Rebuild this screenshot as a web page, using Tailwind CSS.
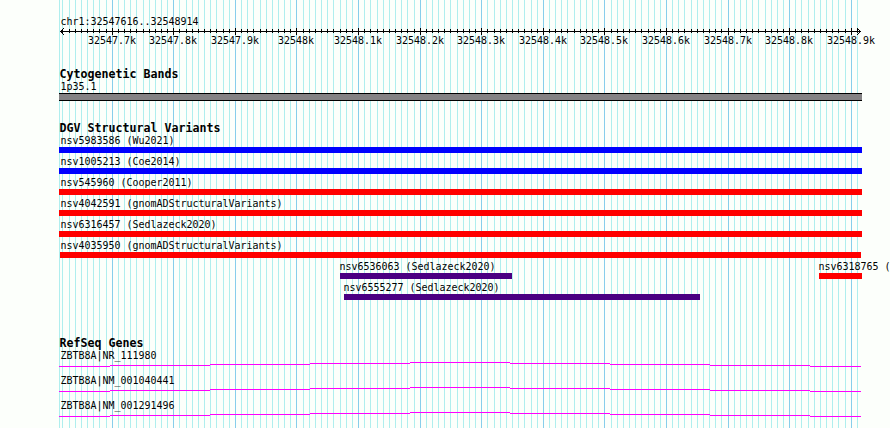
<!DOCTYPE html>
<html lang="en">
<head>
<meta charset="utf-8">
<title>chr1:32547616..32548914</title>
<script src="https://cdn.jsdelivr.net/npm/@tailwindcss/browser@4"></script>
</head>
<body class="bg-[#fcfffb]">
<main class="relative w-[890px] h-[428px] overflow-hidden bg-[#fcfffb]">
<svg id="view" class="block w-full h-full" width="890" height="428" viewBox="0 0 890 428" shape-rendering="crispEdges" font-family="'DejaVu Sans Mono', monospace" font-size="10.5"></svg>
</main>
<script>
const view = document.getElementById('view');
const NS = 'http://www.w3.org/2000/svg';
function add(tag, attrs, text) {
  const el = document.createElementNS(NS, tag);
  for (const k in attrs) el.setAttribute(k, attrs[k]);
  if (text) el.textContent = text;
  view.appendChild(el);
}
const rect = (x, y, width, height, fill) => add('rect', {x, y, width, height, fill});
const label = (x, y, s) => add('text', {x: x + 0.5, y, textLength: s.length * 6, lengthAdjust: 'spacingAndGlyphs', fill: '#000'}, s);
const title = (x, y, s) => add('text', {x, y, textLength: s.length * 7, lengthAdjust: 'spacingAndGlyphs', 'font-size': 11.5, 'font-weight': 700, fill: '#000'}, s);

// Base position to pixel column
const start = 32547616, end = 32548914;
const px = p => Math.round(60 + (p - start) * 800 / 1299);

rect(59, 0, 1, 428, '#afeeee');
for (let p = 32547620; p <= end; p += 10) {
  rect(px(p), 0, 1, 428, p % 100 ? '#afeeee' : '#87ceeb');
}

// Ruler
label(60, 25, 'chr1:32547616..32548914');
rect(60, 31, 801, 1, '#000');
for (let p = 32547620; p <= end; p += 10) {
  const major = p % 100 === 0;
  rect(px(p), major ? 28 : 29, 1, major ? 7 : 4, '#000');
  if (major) {
    const s = p / 1000 + 'k';
    label(px(p) - (s.length === 6 ? 18 : 24) - 0.5, 44, s);
  }
}
for (let i = 1; i < 4; i++) {
  for (const y of [31 - i, 31 + i]) { rect(60 + i, y, 1, 1, '#000'); rect(860 - i, y, 1, 1, '#000'); }
}

// Cytogenetic band
title(59.5, 78, 'Cytogenetic Bands');
label(60, 90, '1p35.1');
rect(59, 93, 803, 8, '#000');
rect(59, 94, 803, 6, '#848284');

// Structural variants
title(59.5, 132, 'DGV Structural Variants');
[
  ['nsv5983586 (Wu2021)', 60, 144, 59, 862, '#0000ff'],
  ['nsv1005213 (Coe2014)', 60, 165, 59, 862, '#0000ff'],
  ['nsv545960 (Cooper2011)', 60, 186, 59, 862, '#ff0000'],
  ['nsv4042591 (gnomADStructuralVariants)', 60, 207, 59, 862, '#ff0000'],
  ['nsv6316457 (Sedlazeck2020)', 60, 228, 59, 862, '#ff0000'],
  ['nsv4035950 (gnomADStructuralVariants)', 60, 249, 60, 861, '#ff0000'],
  ['nsv6536063 (Sedlazeck2020)', 339, 270, 340, 512, '#4b0082'],
  ['nsv6318765 (Sedlazeck2020)', 818, 270, 819, 862, '#ff0000'],
  ['nsv6555277 (Sedlazeck2020)', 343, 291, 344, 700, '#4b0082'],
].forEach(([s, x, y, a, b, fill]) => { label(x, y, s); rect(a, y + 3, b - a, 6, fill); });

// Genes
title(59.5, 347, 'RefSeq Genes');
const steps = [[59, 110, 4], [110, 210, 3], [210, 310, 2], [310, 410, 1], [410, 510, 0], [510, 610, 1], [610, 710, 2], [710, 810, 3], [810, 861, 4]];
[['ZBTB8A|NR_111980', 359], ['ZBTB8A|NM_001040441', 384], ['ZBTB8A|NM_001291496', 409]].forEach(([s, y]) => {
  label(60, y, s);
  for (const [a, b, dy] of steps) rect(a, y + 3 + dy, b - a, 1, '#ff00ff');
});
</script>
</body>
</html>
